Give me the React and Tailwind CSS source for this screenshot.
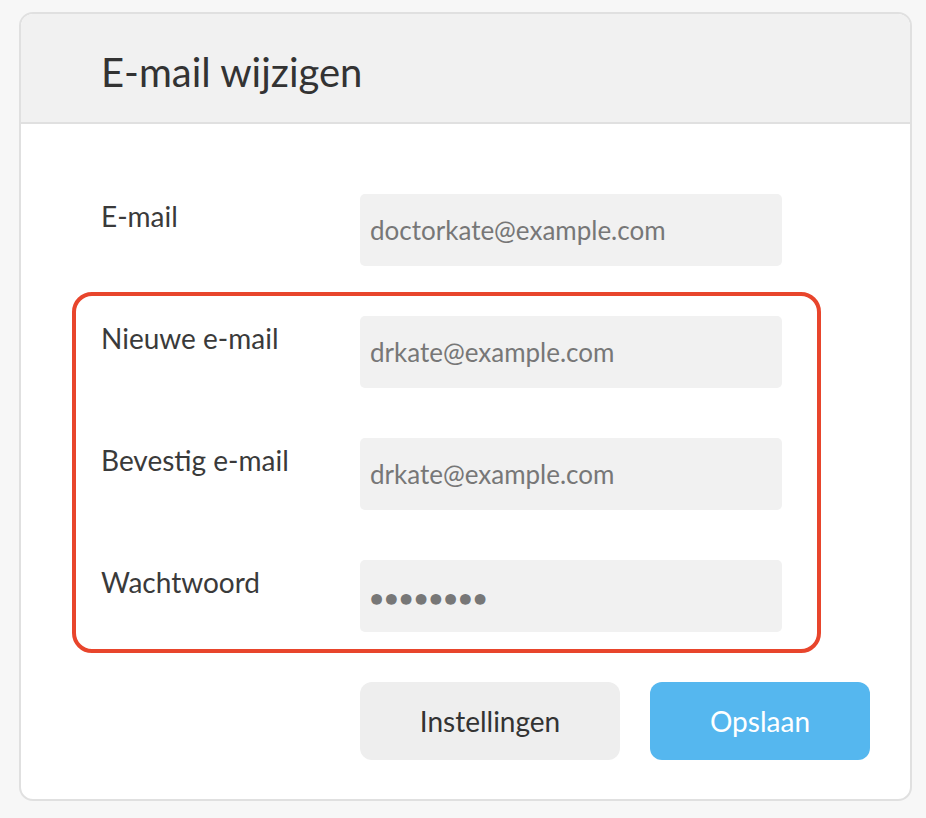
import React from "react";

const Field = ({ label, value, password }) => (
  <div className="flex items-start">
    <div className="w-[259px] pt-[4px] text-[28px] leading-[36px] text-[#3a3a3a]">
      {label}
    </div>
    <div className="w-[422px] h-[72px] rounded-[5px] bg-[#f1f1f1] flex items-center pl-[10px]">
      {password ? (
        <span className="text-[#777777] text-[22px] tracking-[1.6px] leading-none pt-[4px]">
          ●●●●●●●●
        </span>
      ) : (
        <span className="text-[#777777] text-[26px] leading-none">
          {value}
        </span>
      )}
    </div>
  </div>
);

const App = () => {
  return (
    <div
      className="min-h-screen bg-[#f7f7f7] pt-[12px] pl-[19px]"
      style={{ fontFamily: "Lato, 'Open Sans', sans-serif" }}
    >
      <div className="w-[893px] h-[789px] border-2 border-[#e0e0e0] rounded-[14px] bg-white overflow-hidden">
        <div className="h-[110px] bg-[#f1f1f1] border-b-2 border-[#e0e0e0] pl-[80px] pt-[35px]">
          <h1 className="text-[40px] leading-[46px] text-[#333333]">
            E-mail wijzigen
          </h1>
        </div>

        <div className="pt-[70px]">
          <div className="pl-[80px]">
            <Field label="E-mail" value="doctorkate@example.com" />
          </div>

          <div className="mt-[26px] ml-[51px] w-[749px] border-4 border-[#e8452c] rounded-[20px] pt-[20px] pb-[17px] pl-[25px] flex flex-col gap-[50px]">
            <Field label="Nieuwe e-mail" value="drkate@example.com" />
            <Field label="Bevestig e-mail" value="drkate@example.com" />
            <Field label="Wachtwoord" password />
          </div>

          <div className="mt-[29px] pl-[339px] flex gap-[30px]">
            <button className="w-[260px] h-[78px] rounded-[12px] bg-[#eeeeee] text-[28px] text-[#333333]">
              Instellingen
            </button>
            <button className="w-[220px] h-[78px] rounded-[12px] bg-[#55b7ef] text-[28px] text-white">
              Opslaan
            </button>
          </div>
        </div>
      </div>
    </div>
  );
};

export default App;
